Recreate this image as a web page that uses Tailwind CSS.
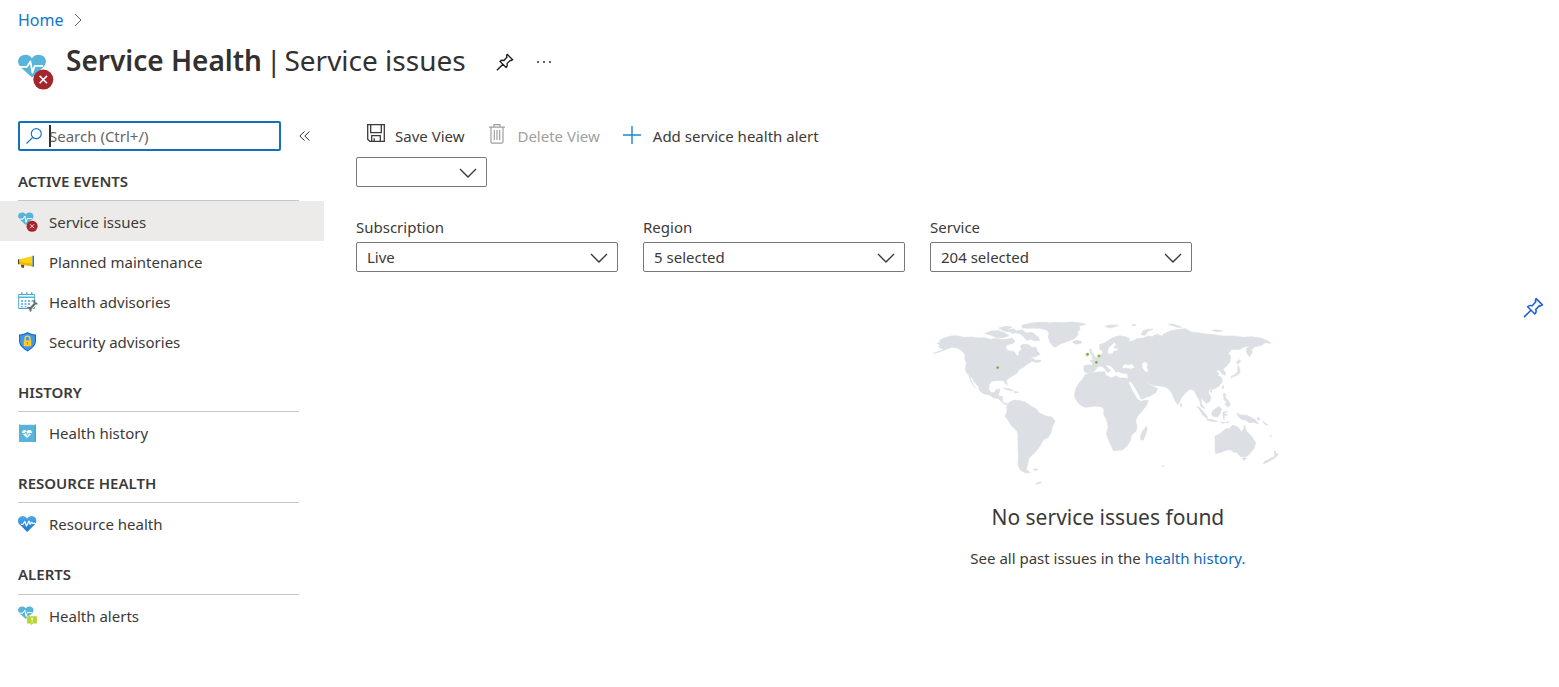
<!DOCTYPE html>
<html lang="en">
<head>
<meta charset="utf-8">
<meta name="viewport" content="width=device-width, initial-scale=1">
<title>Service Health | Service issues</title>
<script src="https://cdn.jsdelivr.net/npm/@tailwindcss/browser@4"></script>
</head>
<body class="min-h-screen bg-white font-['Noto_Sans','Open_Sans',sans-serif] text-[15px] leading-5 text-[#3b3a39]">

<svg class="hidden" aria-hidden="true">
  <symbol id="heart" viewBox="0 0 36 36">
    <path fill="#59b4d9" d="M14 23.500 3 13.500C-.5 10-.8 5.500 2 2.800 5.500-.2 11-.1 14 4.200 17-.1 22.500-.2 26 2.800c2.800 2.700 2.500 7.200-1 10.700z"/>
    <path fill="none" stroke="#fff" stroke-width="1.800" stroke-linejoin="round" d="M0 12.800h9l3.400-5.300 2 11 2.400-6.700H25"/>
  </symbol>
  <symbol id="heart-error" viewBox="0 0 36 36">
    <use href="#heart" width="36" height="36"/>
    <circle cx="25.300" cy="25.600" r="10" fill="#a4262c"/>
    <path stroke="#fff" stroke-width="1.500" d="m21.600 21.900 7.400 7.400m0-7.400-7.400 7.400"/>
  </symbol>
  <symbol id="pin" viewBox="0 0 20 20">
    <path fill="none" stroke="currentColor" stroke-width="1.500" stroke-linejoin="round" d="m12.500 1.500 6 6-1.800 1-.9-.3-3.600 3.600c.6 1.700.3 3.200-.9 4.400L4.400 9.300c1.200-1.200 2.700-1.500 4.400-.9l3.400-3.800-.4-1.300zM7.800 12.400 1 19.200"/>
  </symbol>
  <symbol id="chevron" viewBox="0 0 18 10">
    <path fill="none" stroke="currentColor" stroke-width="1.400" d="m1 1 8 8 8-8"/>
  </symbol>
</svg>

<header class="px-[18px] pt-[9px] text-[#323130]">
  <nav class="flex items-center gap-2.5 text-base leading-[22px]" aria-label="Breadcrumb">
    <a href="#" class="text-[#0f78c8]">Home</a>
    <svg class="h-3 w-2 text-[#605e5c]" viewBox="0 0 8 12"><path fill="none" stroke="currentColor" d="m1 0 6 6-6 6"/></svg>
  </nav>
  <div class="mt-2 flex h-[52px] items-start">
    <svg class="mt-[15px] size-9 shrink-0"><use href="#heart-error"/></svg>
    <h1 class="ml-3 flex text-[28px] leading-[42px] whitespace-nowrap"><span class="mr-1 font-semibold">Service Health</span><span class="mr-[3px]">|</span><span>Service issues</span></h1>
    <button class="ml-[30px] mt-[13px] size-5 text-[#1b1a19]" aria-label="Pin"><svg class="size-[18px]"><use href="#pin"/></svg></button>
    <button class="ml-[18px] mt-[13px] flex size-5 items-center justify-center" aria-label="More">
      <svg class="h-1 w-4" viewBox="0 0 16 4" fill="#323130"><circle cx="2" cy="2" r="1"/><circle cx="8" cy="2" r="1"/><circle cx="14" cy="2" r="1"/></svg>
    </button>
  </div>
</header>

<div class="mt-[30px] flex">
  <aside class="w-[324px] shrink-0">
    <div class="flex items-center gap-[18px] pl-[18px]">
      <div class="relative w-[263px]">
        <svg class="absolute left-2 top-[7px] size-4" viewBox="0 0 16 16"><g fill="none" stroke="#1a74c8" stroke-width="1.200"><circle cx="10.300" cy="5.700" r="5"/><path d="M6.700 9.300.5 15.500"/></g></svg>
        <input type="text" aria-label="Search" placeholder="Search (Ctrl+/)" class="block h-[30px] w-full rounded-[2px] border-2 border-[#146fbf] pl-[29px] pr-2 text-[15px] outline-none placeholder:text-[#666463]">
        <span class="absolute left-[31px] top-1 h-[22px] w-0.5 bg-[#323130]"></span>
      </div>
      <button class="size-3" aria-label="Collapse menu"><svg class="size-3" viewBox="0 0 12 12"><path fill="none" stroke="#323130" d="M5.500 1.500.8 6l4.700 4.500M10.500 1.500 5.800 6l4.700 4.500"/></svg></button>
    </div>

    <nav aria-label="Service Health">
      <h2 class="ml-[18px] mr-[25px] border-b border-[#c8c6c4] pt-5 pb-[9px] text-[15px] font-semibold">ACTIVE EVENTS</h2>
      <a href="#" class="flex h-10 items-center gap-[11px] bg-[#edebe9] pl-[18px] pt-0.5"><svg class="size-5"><use href="#heart-error"/></svg>Service issues</a>
      <a href="#" class="flex h-10 items-center gap-[11px] pl-[18px] pt-0.5">
        <svg class="size-5" viewBox="0 0 20 20"><path fill="#59472c" d="M2.500 10.500h4l-.5 5.300H3.600z"/><path fill="#fcd116" d="M.5 7.500 14.500 4v10.500L.5 12z"/><path fill="#e6b90f" d="m.5 10 14 1.500v3L.5 12z"/><path fill="#59472c" d="M0 7.200h1.200v5H0z"/><path fill="#1777b8" d="M14.500 3.700H16v11h-1.500z"/></svg>Planned maintenance</a>
      <a href="#" class="flex h-10 items-center gap-[11px] pl-[18px] pt-0.5">
        <svg class="size-5" viewBox="0 0 20 20"><path fill="#fff" stroke="#4ba8cc" d="M.7 2.500h16v14H.7z"/><path fill="#59b4d9" d="M1 4.500h15.500V6H1zM3 .3h1.500v3H3zm5 0h1.500v3H8zm5 0h1.500v3H13z"/><path fill="#76bfdf" d="M3 8h2v2H3zm3.500 0h2v2h-2zM10 8h2v2h-2zm3.500 0h2v2h-2zM3 11h2v2H3zm3.500 0h2v2h-2zm3.500 0h2v2h-2zM3 14h2v1.500H3zm3.500 0h2v1.500h-2z"/><path stroke="#fff" stroke-width="3.600" d="m10.500 18.500 7-7.500"/><path stroke="#6b6b6b" stroke-width="2.200" d="m11.500 17.500 5.500-6"/><path fill="none" stroke="#6b6b6b" stroke-width="1.800" d="M16.400 8.300a2.500 2.500 0 0 0 3 3.300M9.500 16.300a1.900 1.900 0 0 1 2.400 3"/></svg>Health advisories</a>
      <a href="#" class="flex h-10 items-center gap-[11px] pl-[18px] pt-0.5">
        <svg class="size-5" viewBox="0 0 20 20"><path fill="#1569c4" d="M9.500 0c2.500 1.700 5 2.300 8.500 2.400v6.400c0 5-4.500 8.200-8.500 10.700C5.500 17 1 13.800 1 8.800V2.400C4.500 2.300 7 1.700 9.500 0z"/><path fill="#3f97ea" d="M9.500 1.200c2.300 1.400 4.500 2 7.500 2.200v5.400c0 4.300-4 7.300-7.500 9.500C6 16.100 2 13.100 2 8.800V3.400c3-.2 5.200-.8 7.500-2.200z"/><path fill="none" stroke="#ffd43b" stroke-width="1.400" d="M7 9V6.600a2.500 2.500 0 0 1 5 0V9"/><rect x="5.700" y="8.200" width="7.600" height="6" rx=".7" fill="#ffca28"/><path fill="#c98a0b" d="M9 10h1v2.500H9z"/></svg>Security advisories</a>

      <h2 class="ml-[18px] mr-[25px] border-b border-[#c8c6c4] pt-[21px] pb-[9px] text-[15px] font-semibold">HISTORY</h2>
      <a href="#" class="flex h-10 items-center gap-[11px] pl-[18px] pt-0.5">
        <svg class="size-5" viewBox="0 0 20 20"><path fill="#4ba8cc" d="M2 1h16v18H2.500A1.500 1.500 0 0 1 1 17.500V2z"/><path fill="#d9eef7" d="M2 1h15.500v1.300H2z"/><path fill="#59b4d9" d="M1 2.300h15.500V19H2.500A1.500 1.500 0 0 1 1 17.500z"/><path fill="#fff" d="M9 15 4.800 11c-2-2.300.8-5.800 4.200-3 3.400-2.800 6.200.7 4.200 3z"/><path fill="none" stroke="#59b4d9" stroke-width=".9" d="M3.500 10.600H7l1.200-2 1 4 1-2H14"/></svg>Health history</a>

      <h2 class="ml-[18px] mr-[25px] border-b border-[#c8c6c4] pt-[21px] pb-[9px] text-[15px] font-semibold">RESOURCE HEALTH</h2>
      <a href="#" class="flex h-10 items-center gap-[11px] pl-[18px] pt-0.5">
        <svg class="size-5" viewBox="0 0 20 20"><defs><linearGradient id="hb" x1="0" y1="0" x2="0" y2="1"><stop stop-color="#50a8ee"/><stop offset="1" stop-color="#1976c9"/></linearGradient></defs><path fill="url(#hb)" d="M9.200 18 1.600 10.500C-.8 7.800-.2 4.500 1.800 3 4.300 1.200 7.500 1.800 9.200 4.500c1.700-2.700 4.900-3.300 7.400-1.500 2 1.500 2.600 4.800.2 7.500z"/><path fill="none" stroke="#fff" stroke-width="1.200" stroke-linejoin="round" d="M3 10.300h2l1.800-2.800 1.700 4.500 2.500-5 1.200 3.300 1.500-2.100.9 1.100h3"/></svg>Resource health</a>

      <h2 class="ml-[18px] mr-[25px] border-b border-[#c8c6c4] pt-[21px] pb-2.5 text-[15px] font-semibold">ALERTS</h2>
      <a href="#" class="flex h-10 items-center gap-[11px] pl-[18px] pt-0.5">
        <svg class="size-5" viewBox="0 0 36 36"><use href="#heart" width="36" height="36"/><path fill="#b8d432" stroke="#fff" stroke-width=".8" d="M16 18h18.500v14H27l-4 3.500V32h-7z"/><path fill="#fff" d="M24.200 20.500h2.400v5.800h-2.400zm0 7.200h2.400v2.200h-2.400z"/></svg>Health alerts</a>
    </nav>
  </aside>

  <main class="min-w-0 grow pl-8">
    <div class="flex h-9 items-start pt-[3px]">
      <button class="flex items-start gap-2.5 pl-[11px]">
        <svg class="size-[18px]" viewBox="0 0 18 18"><g fill="none" stroke="#3b3a39" stroke-width="1.300"><path d="M.7.700h16.600v16.600H2.800L.7 15.200z"/><path d="M3.700.7v8h10.600v-8M4.700 17.300v-5.600h8.600v5.600M7.200 17.300v-3.100"/></g></svg>
        <span class="pt-0.5">Save View</span>
      </button>
      <button disabled class="ml-[25px] flex items-start gap-3 text-[#a19f9d]">
        <svg class="h-5 w-4" viewBox="0 0 16 20"><g fill="none" stroke="currentColor" stroke-width="1.200"><path d="M0 3.100h16M5 3V.7h6V3M2 3.200v14.500q0 1.400 1.400 1.400h9.200q1.400 0 1.400-1.400V3.200M5.300 6v10M8 6v10M10.700 6v10"/></g></svg>
        <span class="pt-0.5">Delete View</span>
      </button>
      <button class="ml-[23px] flex items-start gap-3">
        <svg class="mt-0.5 size-[18px]" viewBox="0 0 18 18"><path stroke="#1a86d6" stroke-width="1.400" d="M9 0v18M0 9h18"/></svg>
        <span class="pt-0.5">Add service health alert</span>
      </button>
    </div>

    <div class="relative w-[131px]">
      <select aria-label="Saved view" class="block h-[30px] w-full appearance-none rounded-[2px] border border-[#7a7876] bg-white pl-2.5 pr-9"><option></option></select>
      <svg class="pointer-events-none absolute right-2.5 top-[11px] h-2.5 w-[18px]"><use href="#chevron"/></svg>
    </div>

    <div class="mt-[30px] flex gap-[25px]">
      <div class="w-[262px]">
        <label for="sub">Subscription</label>
        <div class="relative mt-[5px]">
          <select id="sub" class="block h-[30px] w-full appearance-none rounded-[2px] border border-[#7a7876] bg-white pl-2.5 pr-9"><option>Live</option></select>
          <svg class="pointer-events-none absolute right-2.5 top-[11px] h-2.5 w-[18px]"><use href="#chevron"/></svg>
        </div>
      </div>
      <div class="w-[262px]">
        <label for="reg">Region</label>
        <div class="relative mt-[5px]">
          <select id="reg" class="block h-[30px] w-full appearance-none rounded-[2px] border border-[#7a7876] bg-white pl-2.5 pr-9"><option>5 selected</option></select>
          <svg class="pointer-events-none absolute right-2.5 top-[11px] h-2.5 w-[18px]"><use href="#chevron"/></svg>
        </div>
      </div>
      <div class="w-[262px]">
        <label for="svc">Service</label>
        <div class="relative mt-[5px]">
          <select id="svc" class="block h-[30px] w-full appearance-none rounded-[2px] border border-[#7a7876] bg-white pl-2.5 pr-9"><option>204 selected</option></select>
          <svg class="pointer-events-none absolute right-2.5 top-[11px] h-2.5 w-[18px]"><use href="#chevron"/></svg>
        </div>
      </div>
    </div>

    <section class="pt-6">
      <div class="flex justify-end pr-[15px]"><button class="h-[23px] text-[#1f62d0]" aria-label="Pin map"><svg class="size-[21px]"><use href="#pin"/></svg></button></div>
      <div class="flex">
        <div class="w-1/4 shrink-0"></div>
        <div class="flex grow flex-col items-center">
          <svg class="h-[168px] w-[350px]" viewBox="24 27 1050 504" role="img" aria-label="World map" fill="#dce0e5">
            <g stroke="#dce0e5" stroke-width="2" stroke-linejoin="round">
              <path d="M25 131 45 122 58 118 45 114 41 109 48 105 36 100 47 95 44 90 60 83 78 78 95 77 115 82 140 81 160 84 180 83 195 88 215 85 232 89 245 88 262 84 270 94 262 101 246 104 242 114 249 122 268 125 274 136 281 137 282 125 290 118 286 108 294 102 310 104 322 113 331 110 337 123 345 133 335 139 322 142 313 145 326 146 330 151 347 150 346 156 331 157 320 154 311 161 302 165 296 172 282 178 278 188 266 196 251 205 244 211 247 224 241 222 238 213 225 211 211 212 199 214 193 223 191 238 198 248 208 248 213 239 225 237 222 249 220 257 233 260 232 274 241 281 252 280 242 285 231 277 221 266 205 263 195 256 175 251 163 241 161 231 149 217 142 204 135 199 139 215 148 232 152 234 144 226 136 208 131 196 124 187 121 177 124 158 118 143 121 138 114 126 100 115 82 112 65 117 45 125Z"/>
              <path d="m180 70 17-7 25-1 18 7 12 9-19 5-20-1-12-5zM222 54l20-5 19 2-14 7 20-1 8 6 17-4 10 10 20-2 18 15 4 9-12 2-17-6-8 5-10-10-8-9-17-5-8 3-8-5-20-3zM290 46l20-5 30-4 31 0-16 8-30 4-12 6-20-1z"/>
              <path d="m313 54 30-10 22-3 20-4 29 1 30-2 27 4 12 3-20 5 2 10-8 8 2 9-12 12-24 9-16 5-15 10-8-2-9-12-5-16 2-12-7-9-20-5zM444 94l14-2 12 3-3 5-14 2-9-5zM292 139l14 1 5 4-14 1zM235 235l17 1 14 6-10 0-13-4zM268 244l14 3-13 2z"/>
              <path d="M245 290 254 276 268 270 285 272 300 276 318 288 335 298 342 308 362 318 382 322 390 334 382 350 378 368 370 382 355 390 345 408 335 422 325 432 318 438 312 445 308 462 304 478 316 488 300 488 286 480 279 465 280 440 279 400 279 375 276 362 262 350 250 332 240 318 246 305ZM325 477l11-1 2 4-9 1zM332 521l12-5 7 1-11 5z"/>
            </g>
            <g transform="translate(420 0)" stroke="#dce0e5" stroke-width="2" stroke-linejoin="round">
              <path d="M57 167 70 165 82 166 82 158 75 152 88 148 98 140 106 134 114 130 112 122 104 118 104 104 120 98 135 88 150 80 165 77 180 80 195 86 188 94 205 92 215 86 235 84 250 78 262 80 275 72 290 78 300 70 318 62 340 58 362 56 378 66 400 68 420 72 445 74 475 78 510 78 535 82 560 80 590 85 608 92 618 100 600 98 590 106 570 110 560 118 562 128 553 140 545 128 544 116 555 108 540 110 525 118 500 118 490 130 497 138 495 155 483 170 474 178 482 190 480 196 472 192 462 180 453 182 462 192 456 196 470 202 472 216 460 230 445 238 432 238 430 248 438 262 434 275 424 280 412 268 408 262 410 282 420 296 408 290 404 272 396 258 386 240 374 238 360 250 350 262 344 275 338 284 328 268 320 248 312 238 304 232 285 228 265 226 250 220 240 210 250 222 262 228 278 236 272 248 255 258 228 268 220 258 205 232 195 214 190 204 186 190 172 190 160 184 156 188 148 180 142 171 132 166 122 164 130 176 138 181 128 188 118 174 110 168 98 170 90 182 75 188 60 187 57 180Z"/>
              <path d="m74 117 6 1 0 8 8 12 4 6-12 2 3-6-6-9zM62 130l8 0-1 9-8-1zM120 49l14-4 26 1-10 4-15 4zM228 74l6-11 12-5 18-1-15 7-9 12zM201 44l12-1 0 3-12 1zM310 43l14-1 18 6 8 4-12 0-15-5zM440 61l15-2 18 4-16 2zM24 94l14-2 12 3-3 5-14 2-9-5z"/>
              <path d="M62 193 78 188 100 186 120 185 122 196 140 204 152 198 165 204 180 204 192 206 194 218 205 236 218 262 226 274 250 270 246 284 232 302 218 318 212 332 216 350 214 362 200 375 196 392 186 408 172 420 145 422 140 410 132 392 124 372 130 352 125 330 116 312 117 296 108 290 90 288 78 290 60 292 45 284 34 270 28 258 32 238 40 222 52 208ZM243 348l4 9-6 18-6 15-8-1 0-11 6-16 6-5z"/>
              <path d="m450 378 14-6 10-9 11-8 8 2 9-11 7 1 9 4 12 14 5-7 4-13 5 18 10 10 8 9 10 17-5 17-10 11-8 10-11 4-12-2-11-12-8 0-11-8-13 2-14 6-17 4-2-15zM531 444l13 0-7 8zM629 421l3 8 8 4-9 10-5 2 3-9zM622 441l5 4-18 11-14 5 4-7 11-5zM347 279l4 8-3 4-3-6z"/>
              <path d="m395 289 10 5 13 14 10 13-3 4-12-10-9-15zM425 327l17 2 15 5-13 1-17-4zM442 304l19-15 9 8-5 14-7 10-13-1-5-7zM474 307l14-3-10 5 9 7-8 0-2 13-3-12zM475 250l7 2-1 11 9 8 6 14-7 7-9-9 5-6-8-8zM515 310l12 5 18 1 24 12 12 14-16-5-14 1-5-6-16-4-9-7zM475 226l2 6-4 5-2-6zM523 149l5 5-11 8-3-6zM519 165l5 11 1 12-9 8-14 5-4 4 1-7 10-3 9-10zM436 241l5 1-2 6-4-3zM466 337l15 0-7 3zM483 337l10-2-7 5zM578 321l8 6-9 3zM592 335l7 2 10 8-6 0zM615 375l5 3-3 2zM292 467l6 1-3 3z"/>
            </g>
            <g fill="#fff"><path d="m652 160 10-4 6 7-3 7 5 13-7 4-8-10-4-9z"/><path d="m611 217 7-1 12 19 16 29-2 6-6-3-14-23z"/><path d="m593 167 8-5 8 3 12-2 8 9-10 4-18-2-8 1z"/><path d="m548 128 3-14 16-16 6 4-8 12 14 3-1 4-12 2-4 8-8 0z"/></g>
            <g fill="#5ea30c" stroke="#c9dca8" stroke-width="2"><circle cx="218" cy="173" r="4"/><circle cx="488" cy="133" r="4"/><circle cx="522" cy="138" r="4"/><circle cx="514" cy="157" r="4"/></g>
          </svg>
          <h2 class="mt-4 text-[21px] leading-7">No service issues found</h2>
          <p class="mt-[17px]">See all past issues in the <a href="#" class="text-[#0f69b8]">health history.</a></p>
        </div>
      </div>
    </section>
  </main>
</div>
</body>
</html>
